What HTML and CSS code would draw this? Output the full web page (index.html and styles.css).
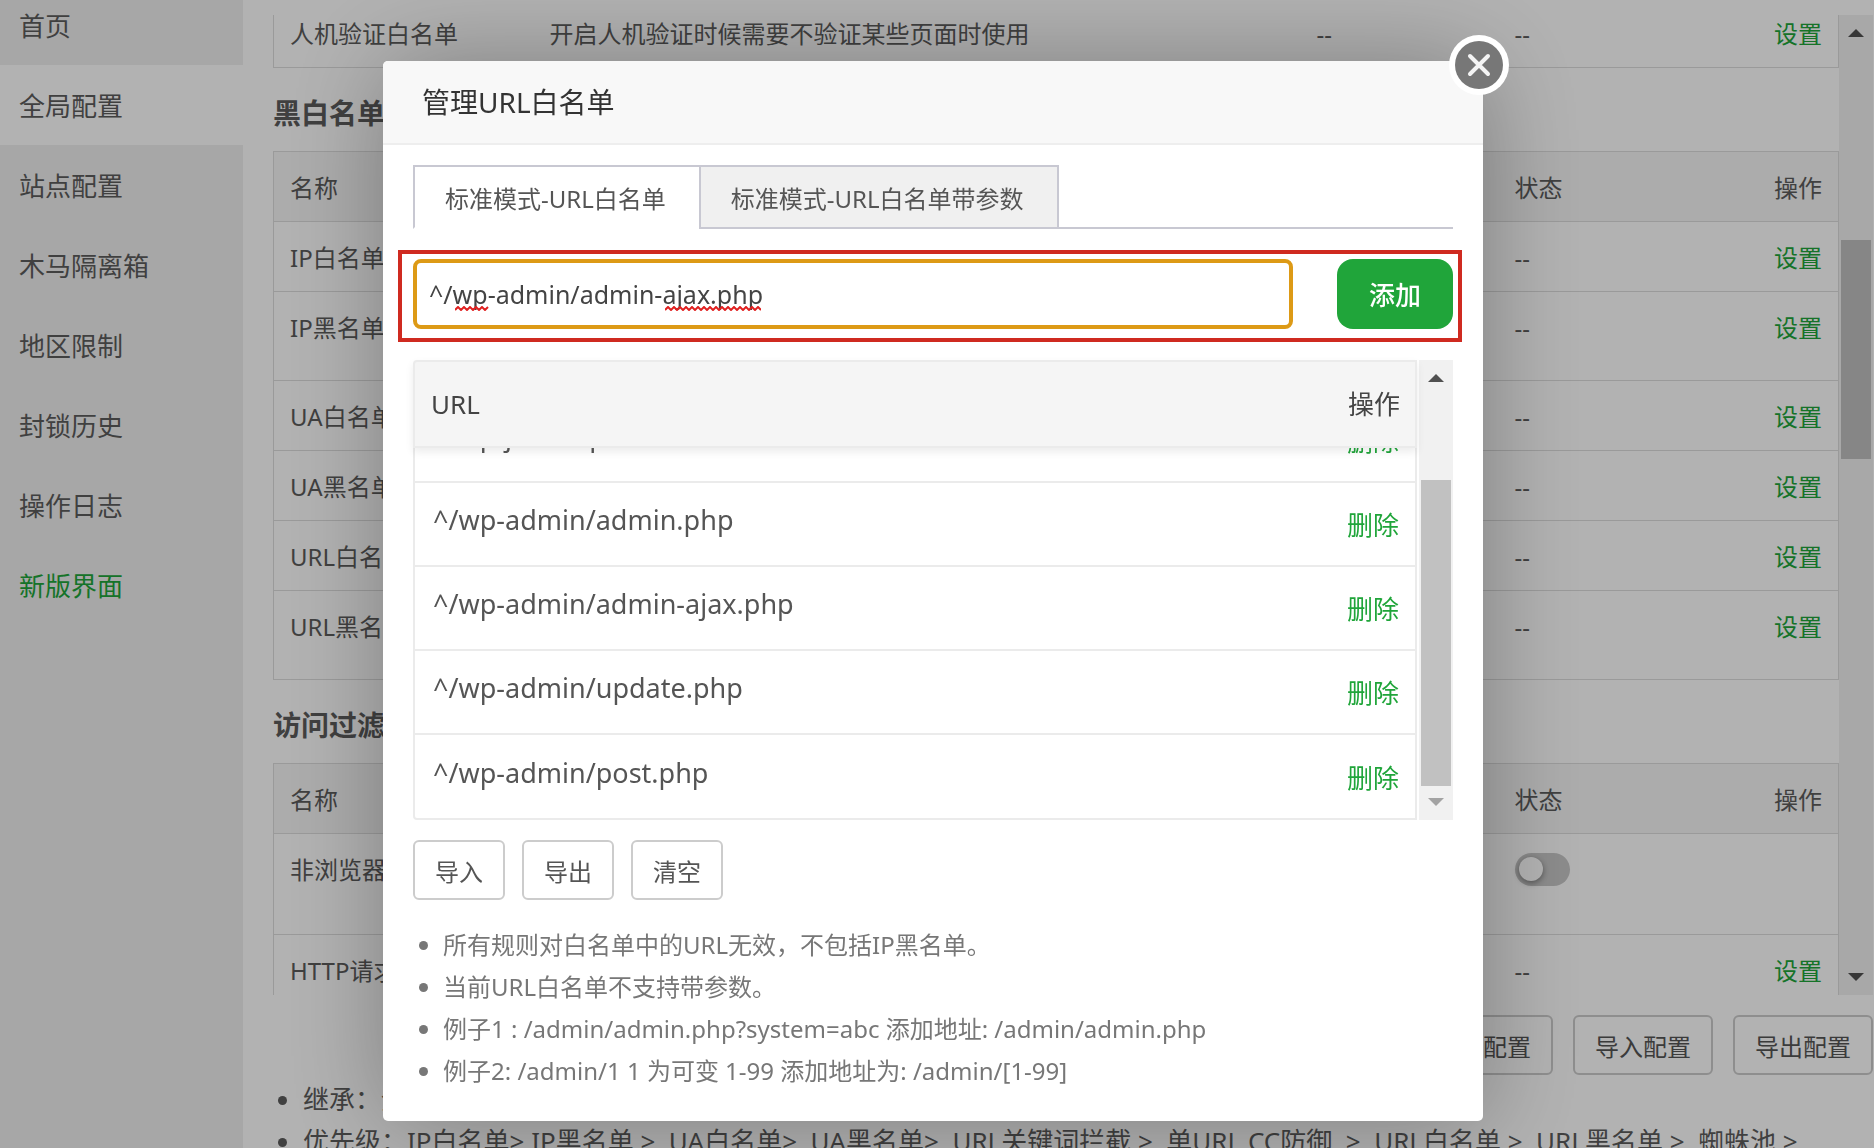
FILE: index.html
```
<!DOCTYPE html>
<html lang="zh-CN">
<head>
    <meta charset="UTF-8">
    <meta name="viewport" content="width=device-width, initial-scale=1.0">

    <title>管理URL白名单</title>
    <link rel="stylesheet" href="styles.css">
</head>
<body>
    <nav class="sidebar">
        <a href="#">首页</a>
        <a href="#" class="active">全局配置</a>
        <a href="#">站点配置</a>
        <a href="#">木马隔离箱</a>
        <a href="#">地区限制</a>
        <a href="#">封锁历史</a>
        <a href="#">操作日志</a>
        <a href="#" class="green">新版界面</a>
    </nav>

    <main class="main">
        <div class="scroller">
            <div class="scroll-content">
                <table class="config first">
                    <tbody>
                        <tr><td class="name">人机验证白名单</td><td>开启人机验证时候需要不验证某些页面时使用</td><td class="code">--</td><td class="state">--</td><td class="action"><a href="#">设置</a></td></tr>
                    </tbody>
                </table>

                <h2>黑白名单</h2>
                <table class="config">
                    <thead>
                        <tr><th class="name">名称</th><th></th><th class="code"></th><th class="state">状态</th><th class="action">操作</th></tr>
                    </thead>
                    <tbody>
                        <tr><td>IP白名单</td><td></td><td></td><td>--</td><td class="action"><a href="#">设置</a></td></tr>
                        <tr class="tall"><td>IP黑名单</td><td></td><td></td><td>--</td><td class="action"><a href="#">设置</a></td></tr>
                        <tr><td>UA白名单</td><td></td><td></td><td>--</td><td class="action"><a href="#">设置</a></td></tr>
                        <tr><td>UA黑名单</td><td></td><td></td><td>--</td><td class="action"><a href="#">设置</a></td></tr>
                        <tr><td>URL白名单</td><td></td><td></td><td>--</td><td class="action"><a href="#">设置</a></td></tr>
                        <tr class="tall"><td>URL黑名单</td><td></td><td></td><td>--</td><td class="action"><a href="#">设置</a></td></tr>
                    </tbody>
                </table>

                <h2>访问过滤</h2>
                <table class="config">
                    <thead>
                        <tr><th class="name">名称</th><th></th><th class="code"></th><th class="state">状态</th><th class="action">操作</th></tr>
                    </thead>
                    <tbody>
                        <tr class="taller"><td>非浏览器拦截</td><td></td><td></td><td><input type="checkbox" class="switch" aria-label="非浏览器拦截"></td><td></td></tr>
                        <tr><td>HTTP请求过滤</td><td></td><td></td><td>--</td><td class="action"><a href="#">设置</a></td></tr>
                    </tbody>
                </table>
            </div>
            <div class="scrollbar page-bar">
                <svg class="arrow" viewBox="0 0 16 8"><path d="M0 8L8 0L16 8Z"/></svg>
                <div class="track"><div class="thumb"></div></div>
                <svg class="arrow" viewBox="0 0 16 8"><path d="M0 0L8 8L16 0Z"/></svg>
            </div>
        </div>

        <footer class="page-footer">
            <div class="page-buttons">
                <button type="button">恢复默认配置</button>
                <button type="button">导入配置</button>
                <button type="button">导出配置</button>
            </div>
            <ul class="page-notes">
                <li>继承：全局设置将在站点配置中自动继承为默认值</li>
                <li>优先级：IP白名单&gt; IP黑名单 &gt;&nbsp; UA白名单&gt;&nbsp; UA黑名单&gt;&nbsp; URL关键词拦截 &gt;&nbsp; 单URL CC防御&nbsp; &gt;&nbsp; URL白名单 &gt;&nbsp; URL黑名单 &gt;&nbsp; 蜘蛛池 &gt;</li>
            </ul>
        </footer>
    </main>

    <div class="overlay">
        <section class="modal" role="dialog" aria-labelledby="modalTitle">
            <button type="button" class="close" aria-label="关闭">
                <svg viewBox="0 0 60 60"><circle cx="30" cy="30" r="30" fill="#fff"/><circle cx="30" cy="30" r="24" fill="#777"/><path d="M21 21L39 39M39 21L21 39" stroke="#f4f4f4" stroke-width="4" stroke-linecap="round"/></svg>
            </button>
            <h1 id="modalTitle">管理URL白名单</h1>

            <div class="modal-body">
                <div class="tabs">
                    <button type="button" class="tab on">标准模式-URL白名单</button>
                    <button type="button" class="tab">标准模式-URL白名单带参数</button>
                </div>

                <form class="add-row">
                    <div class="url-field">
                        <input type="text" value="^/wp-admin/admin-ajax.php" aria-label="URL" spellcheck="false">
                        <svg class="squiggle wp" width="34" height="5"><path d="M0 4l3-3l3 3l3-3l3 3l3-3l3 3l3-3l3 3l3-3l3 3l3-3"/></svg>
                        <svg class="squiggle ajax" width="96" height="5"><path d="M0 4l3-3l3 3l3-3l3 3l3-3l3 3l3-3l3 3l3-3l3 3l3-3l3 3l3-3l3 3l3-3l3 3l3-3l3 3l3-3l3 3l3-3l3 3l3-3l3 3l3-3l3 3l3-3l3 3l3-3l3 3l3-3l3 3"/></svg>
                    </div>
                    <button type="button" class="add">添加</button>
                </form>

                <div class="url-list">
                    <div class="list-main">
                        <div class="list-head"><span>URL</span><span>操作</span></div>
                        <div class="list-scroll">
                            <table>
                                <tr><td>^/wp-json/wp/v2/</td><td class="action"><a href="#">删除</a></td></tr>
                                <tr><td>^/wp-admin/admin.php</td><td class="action"><a href="#">删除</a></td></tr>
                                <tr><td>^/wp-admin/admin-ajax.php</td><td class="action"><a href="#">删除</a></td></tr>
                                <tr><td>^/wp-admin/update.php</td><td class="action"><a href="#">删除</a></td></tr>
                                <tr><td>^/wp-admin/post.php</td><td class="action"><a href="#">删除</a></td></tr>
                            </table>
                        </div>
                    </div>
                    <div class="scrollbar list-bar">
                        <svg class="arrow" viewBox="0 0 16 8"><path d="M0 8L8 0L16 8Z"/></svg>
                        <div class="track"><div class="thumb"></div></div>
                        <svg class="arrow off" viewBox="0 0 16 8"><path d="M0 0L8 8L16 0Z"/></svg>
                    </div>
                </div>

                <div class="list-buttons">
                    <button type="button">导入</button>
                    <button type="button">导出</button>
                    <button type="button">清空</button>
                </div>

                <ul class="notes">
                    <li>所有规则对白名单中的URL无效，不包括IP黑名单。</li>
                    <li>当前URL白名单不支持带参数。</li>
                    <li>例子1 : /admin/admin.php?system=abc 添加地址: /admin/admin.php</li>
                    <li>例子2: /admin/1 1 为可变 1-99 添加地址为: /admin/[1-99]</li>
                </ul>
            </div>
        </section>
    </div>
</body>
</html>
```
FILE: styles.css
```
* {
    box-sizing: border-box;
}

body {
    margin: 0;
    height: 100vh;
    display: flex;
    overflow: hidden;
    background: #fff;
    color: #555;
    font-family: "Noto Sans", "Noto Sans CJK SC", sans-serif;
    font-size: 24px;
    line-height: 42px;
}

button, input {
    font-family: inherit;
    font-size: 24px;
    color: #555;
}

button {
    cursor: pointer;
}

a {
    color: #20a53a;
    text-decoration: none;
}

h1, h2, ul {
    margin: 0;
    padding: 0;
    font-weight: normal;
}

/* Sidebar */
.sidebar {
    flex: 0 0 243px;
    background: #f0f0f0;
    overflow: hidden;
}

.sidebar a {
    display: block;
    height: 80px;
    padding-left: 19px;
    line-height: 82px;
    font-size: 26px;
    color: #5c5c5c;
}

.sidebar a:first-child {
    margin-top: -15px;
}

.sidebar a.active {
    background: #fff;
}

.sidebar a.green {
    color: #20a53a;
}

/* Page behind the dialog */
.main {
    flex: 1;
    min-width: 0;
    display: flex;
    flex-direction: column;
    padding: 15px 1px 0 30px;
    color: #5c5c5c;
}

.scroller {
    flex: 1;
    min-height: 0;
    display: flex;
    overflow: hidden;
}

.scroll-content {
    flex: 1;
    overflow: hidden;
}

.config {
    width: 100%;
    table-layout: fixed;
    border-collapse: collapse;
    border: 1px solid #ddd;
}

.config.first {
    margin-top: -18px;
}

.config tr {
    height: 70px;
    border-bottom: 1px solid #ddd;
}

.config .tall {
    height: 89px;
}

.config .taller {
    height: 101px;
}

.config td, .config th {
    padding: 15px 16px 0;
    text-align: left;
    vertical-align: top;
    font-weight: normal;
    white-space: nowrap;
}

.config th {
    background: #f6f6f6;
}

.config .name {
    width: 260px;
}

.config .code {
    width: 198px;
}

.config .state {
    width: 200px;
}

.config td.action,
.config th.action {
    width: 140px;
    text-align: right;
}

h2 {
    height: 83px;
    line-height: 90px;
    font-size: 28px;
    font-weight: bold;
}

.switch {
    appearance: none;
    display: block;
    width: 55px;
    height: 33px;
    margin: 4px 0 0;
    padding: 4px;
    border-radius: 17px;
    background: #c8c8c8;
}

.switch::before {
    content: "";
    display: block;
    width: 24px;
    height: 24px;
    border-radius: 50%;
    background: #fff;
    box-shadow: 0 2px 6px rgba(0, 0, 0, 0.4);
}

/* Scrollbars */
.scrollbar {
    flex: 0 0 34px;
    display: flex;
    flex-direction: column;
    align-items: center;
    background: #f1f1f1;
    padding: 14px 0;
}

.arrow {
    width: 16px;
    height: 8px;
    fill: #505050;
}

.arrow.off {
    fill: #a3a3a3;
}

.track {
    flex: 1;
    width: 30px;
    margin: 12px 0;
}

.thumb {
    background: #c1c1c1;
}

.page-bar .thumb {
    height: 24%;
    margin-top: 191px;
}

.list-bar .thumb {
    height: 306px;
    margin-top: 86px;
}

.page-footer {
    flex: 0 0 153px;
    overflow: hidden;
    padding-top: 20px;
}

.page-buttons {
    display: flex;
    justify-content: flex-end;
    gap: 20px;
}

.page-buttons button,
.list-buttons button {
    height: 60px;
    padding: 0 20px;
    border: 2px solid #ccc;
    border-radius: 6px;
    background: #fff;
}

.page-notes {
    margin-top: 3px;
    padding-left: 30px;
    font-size: 26px;
    white-space: nowrap;
}

/* Dialog */
.overlay {
    position: fixed;
    inset: 0;
    display: flex;
    justify-content: center;
    align-items: flex-start;
    padding: 61px 8px 0 0;
    background: rgba(0, 0, 0, 0.3);
}

.modal {
    position: relative;
    width: 1100px;
    padding-bottom: 29px;
    border-radius: 5px;
    background: #fff;
    box-shadow: 2px 2px 100px rgba(0, 0, 0, 0.3);
}

.close {
    position: absolute;
    top: -26px;
    right: -26px;
    width: 60px;
    height: 60px;
    padding: 0;
    border: none;
    background: none;
}

.close svg {
    display: block;
}

h1 {
    padding: 0 39px;
    border-bottom: 2px solid #eee;
    border-radius: 5px 5px 0 0;
    background: #f8f8f8;
    color: #333;
    font-size: 28px;
    line-height: 82px;
}

.modal-body {
    padding: 20px 30px 0;
}

.tabs {
    display: flex;
    border-bottom: 2px solid #c8c8d2;
}

.tab {
    height: 64px;
    margin: 0 0 -2px -2px;
    padding: 0 33px 0 30px;
    border: 2px solid #c8c8d2;
    background: #f0f0f0;
}

.tab.on {
    margin-left: 0;
    border-bottom-color: #fff;
    background: #fff;
}

.add-row {
    display: flex;
    justify-content: space-between;
    margin: 21px -9px 18px -15px;
    padding: 5px 5px 9px 11px;
    border: 4px solid #cf2a20;
}

.url-field {
    position: relative;
    flex: 0 0 880px;
}

.url-field input {
    width: 100%;
    height: 70px;
    padding: 0 12px;
    border: 4px solid #dd9a16;
    border-radius: 8px;
    outline: none;
    color: #444;
    font-size: 25px;
}

.squiggle {
    position: absolute;
    top: 47px;
    fill: none;
    stroke: #e02020;
    stroke-width: 2;
}

.squiggle.wp {
    left: 42px;
}

.squiggle.ajax {
    left: 252px;
}

.add {
    width: 116px;
    height: 70px;
    border: none;
    border-radius: 16px;
    background: #20a53a;
    color: #fff;
    font-size: 26px;
    font-weight: 500;
}

.url-list {
    display: flex;
    gap: 2px;
    height: 460px;
    font-size: 26px;
}

.list-main {
    flex: 1;
    display: flex;
    flex-direction: column;
}

.list-head {
    position: relative;
    display: flex;
    justify-content: space-between;
    padding: 0 15px 0 16px;
    border: 2px solid #ebebeb;
    border-radius: 4px 0 0 0;
    background: #f5f5f5;
    color: #444;
    line-height: 84px;
    box-shadow: 0 4px 8px rgba(0, 0, 0, 0.08);
}

.list-scroll {
    flex: 1;
    min-height: 0;
    display: flex;
    align-items: flex-end;
    overflow: hidden;
    border: 2px solid #ebebeb;
    border-top: none;
    border-radius: 0 0 0 4px;
}

.list-scroll table {
    width: 100%;
    border-collapse: collapse;
}

.list-scroll tr {
    height: 84px;
    border-top: 2px solid #ebebeb;
}

.list-scroll td {
    padding: 0 18px 8px;
    font-size: 27px;
}

.list-scroll .action {
    padding: 2px 16px 0;
    font-size: 26px;
    text-align: right;
}

.list-buttons {
    display: flex;
    gap: 17px;
    margin: 20px 0 24px;
}

.notes {
    padding-left: 30px;
    color: #777;
}
```
